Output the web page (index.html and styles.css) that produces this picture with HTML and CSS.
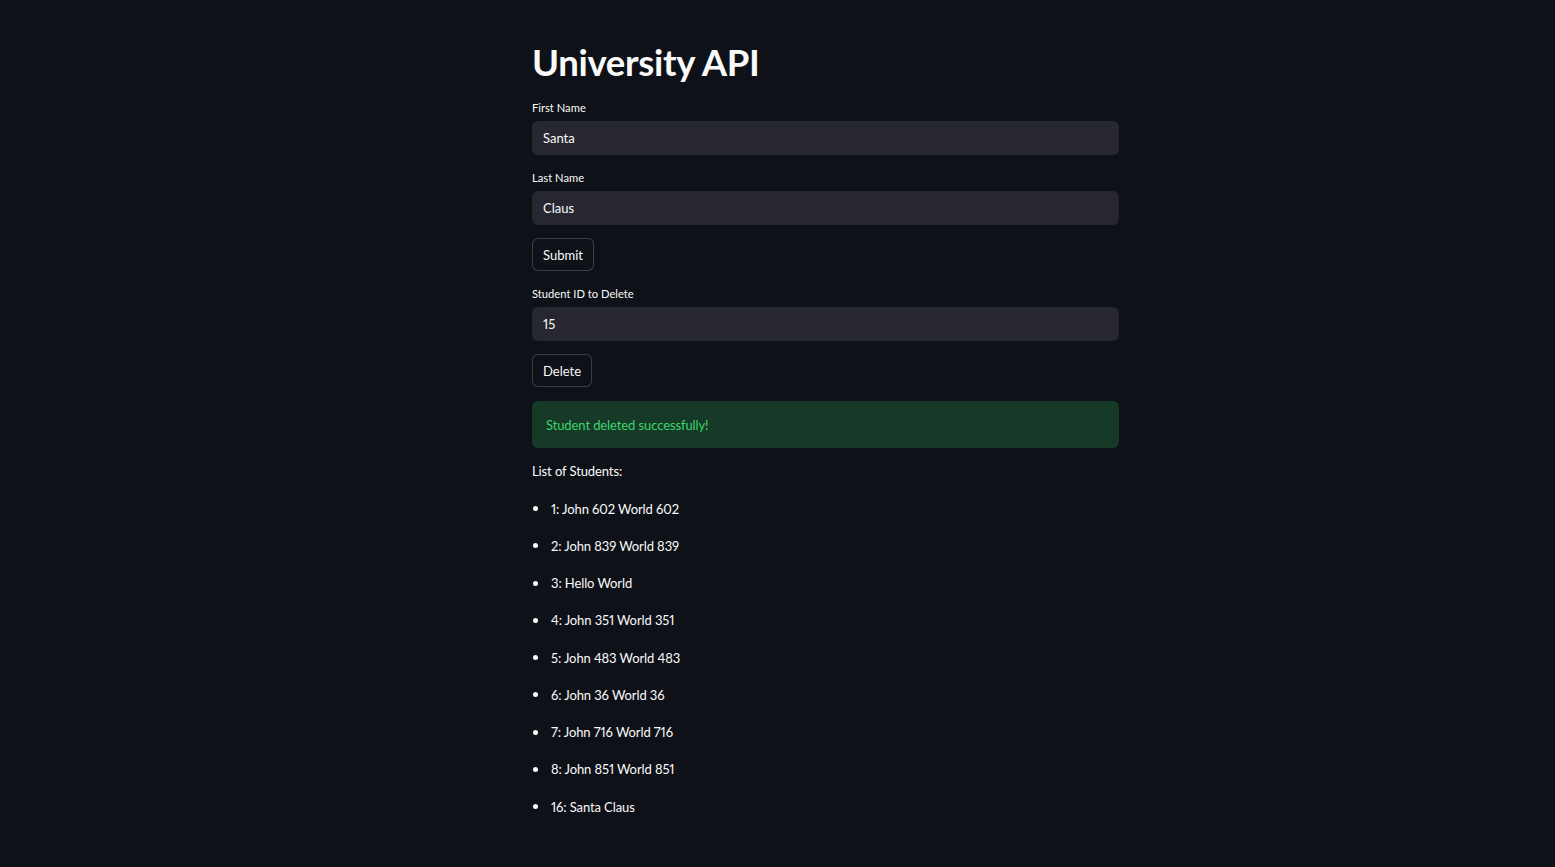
FILE: index.html
```html
<!DOCTYPE html>
<html lang="en">
<head>
<meta charset="utf-8">
<title>University API</title>
<link rel="stylesheet" href="styles.css">
</head>
<body>
<main class="app">
  <h1 class="title">University API</h1>

  <div class="field">
    <label class="label">First Name</label>
    <div class="input">Santa</div>
  </div>

  <div class="field">
    <label class="label">Last Name</label>
    <div class="input">Claus</div>
  </div>

  <div class="btn-row"><button class="btn">Submit</button></div>

  <div class="field">
    <label class="label">Student ID to Delete</label>
    <div class="input">15</div>
  </div>

  <div class="btn-row"><button class="btn">Delete</button></div>

  <div class="alert">Student deleted successfully!</div>

  <p class="list-title">List of Students:</p>
  <ul class="list">
    <li>1: John 602 World 602</li>
    <li>2: John 839 World 839</li>
    <li>3: Hello World</li>
    <li>4: John 351 World 351</li>
    <li>5: John 483 World 483</li>
    <li>6: John 36 World 36</li>
    <li>7: John 716 World 716</li>
    <li>8: John 851 World 851</li>
    <li>16: Santa Claus</li>
  </ul>
</main>
</body>
</html>
```

FILE: styles.css
```css
html, body {
  margin: 0;
  padding: 0;
  background: #0e1117;
  color: #fafafa;
  font-family: Lato, "Noto Sans", sans-serif;
  font-variant-numeric: proportional-nums;
}

.app {
  width: 587px;
  margin-left: 532px;
  padding-top: 40px;
  display: flex;
  flex-direction: column;
}

.title {
  margin: 0;
  font-size: 36.5px;
  line-height: 44px;
  font-weight: 700;
  letter-spacing: -0.3px;
}

.field {
  display: flex;
  flex-direction: column;
  gap: 5px;
  margin-top: 16px;
}

.field + .field {
  margin-top: 15px;
}

.label {
  font-size: 11.2px;
  line-height: 16px;
  height: 16px;
}

.input {
  height: 34px;
  box-sizing: border-box;
  background: #262730;
  border-radius: 6px;
  padding: 0 11px;
  display: flex;
  align-items: center;
  font-size: 13px;
}

.btn-row {
  margin-top: 13px;
  display: flex;
}

.btn {
  height: 33px;
  box-sizing: border-box;
  padding: 0 10px;
  background: #0e1117;
  color: #fafafa;
  border: 1px solid rgba(250, 250, 250, 0.2);
  border-radius: 6px;
  font-family: inherit;
  font-size: 13px;
}

.btn-row + .field {
  margin-top: 15px;
}

.btn-row + .alert {
  margin-top: 14px;
}

.alert {
  height: 47px;
  box-sizing: border-box;
  padding: 0 14px;
  display: flex;
  align-items: center;
  background: #173928;
  color: #3dd56d;
  border-radius: 6px;
  font-size: 13px;
  letter-spacing: -0.1px;
}

.list-title {
  margin: 15px 0 0 0;
  font-size: 13px;
  line-height: 16px;
  letter-spacing: -0.1px;
}

.list {
  margin: 11px 0 0 0;
  padding: 0;
  list-style: none;
}

.list li {
  display: flex;
  align-items: center;
  gap: 13px;
  font-size: 13px;
  line-height: 16px;
  padding: 10.63px 0;
  letter-spacing: -0.1px;
}

.list li::before {
  content: "";
  width: 5px;
  height: 5px;
  margin-left: 1px;
  border-radius: 50%;
  background: #fafafa;
  flex: none;
}
```
